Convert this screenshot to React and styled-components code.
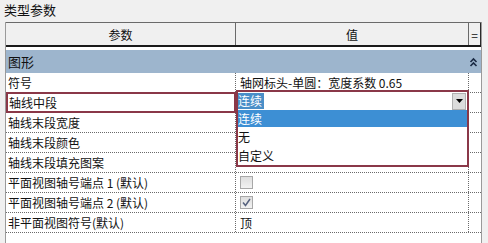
import React from "react";
import styled, { createGlobalStyle } from "styled-components";

const GlobalStyle = createGlobalStyle`
  body {
    margin: 0;
    background: #f0f0f0;
    font-family: "Noto Sans CJK SC", "Noto Sans", sans-serif;
    color: #111;
  }
`;

const COLS = "230px 233px 12px";
const MAROON = "#8a3848";

const Page = styled.div`
  width: 488px;
  height: 243px;
  display: flex;
  flex-direction: column;
  overflow: hidden;
`;

const Title = styled.div`
  height: 22px;
  padding-left: 4px;
  font-size: 13px;
  line-height: 19px;
`;

const Frame = styled.div`
  flex: 1;
  position: relative;
  width: 475px;
  margin-left: 5px;
  background: #fff;
  border-left: 1px solid #9a9a9a;
  border-right: 1px solid #9a9a9a;
`;

const HeaderRow = styled.div`
  display: grid;
  grid-template-columns: ${COLS};
  height: 22px;
  background: #f0f0f0;
  border-top: 1px solid #6a6a6a;
  border-bottom: 2px solid #1a1a1a;
`;

const HeaderCell = styled.div`
  display: flex;
  align-items: center;
  justify-content: center;
  font-size: 12px;
  border-right: 1px solid ${(p) => (p.$last ? "#2a2a2a" : "#6a6a6a")};
`;

const Gap = styled.div`
  height: 3px;
`;

const GroupRow = styled.div`
  display: flex;
  align-items: center;
  justify-content: space-between;
  height: 23px;
  padding: 0 3px 0 2px;
  background: #9db5cd;
  font-size: 13px;
`;

const Row = styled.div`
  display: grid;
  grid-template-columns: ${COLS};
  height: 19px;
  border-bottom: 1px dotted #6a6a6a;
`;

const Cell = styled.div`
  display: flex;
  align-items: center;
  padding-left: ${(p) => (p.$value ? "4px" : "2px")};
  font-size: 12px;
  white-space: nowrap;
  border-right: ${(p) => (p.$end ? "none" : "1px dotted #6a6a6a")};
  box-sizing: border-box;
  ${(p) =>
    p.$active &&
    `
    border: 2px solid ${MAROON};
    margin: -1px 0 -1px 0;
    padding-left: 1px;
  `}
`;

const Check = styled.span`
  width: 11px;
  height: 11px;
  border: 1px solid #a8a8a8;
  background: linear-gradient(#dedede, #f2f2f2);
  display: flex;
  align-items: center;
  justify-content: center;
`;

const Dropdown = styled.div`
  position: absolute;
  left: 230px;
  top: 68px;
  width: 233px;
  box-sizing: border-box;
  border: 2px solid ${MAROON};
  background: #fff;
  font-size: 12px;
`;

const Field = styled.div`
  display: flex;
  align-items: center;
  justify-content: space-between;
  height: 18px;
  padding-right: 1px;
`;

const SelectedText = styled.span`
  background: #4a8fc8;
  color: #fff;
  padding: 0 2px 0 0;
  line-height: 16px;
`;

const ArrowButton = styled.span`
  width: 12px;
  height: 15px;
  background: #dcdcdc;
  border: 1px solid #b0b0b0;
  display: flex;
  align-items: center;
  justify-content: center;
`;

const Item = styled.div`
  height: ${(p) => (p.$h ? p.$h : 19)}px;
  display: flex;
  align-items: center;
  padding-left: 0;
  background: ${(p) => (p.$selected ? "#3d8fd4" : "transparent")};
  color: ${(p) => (p.$selected ? "#fff" : "#111")};
`;

const rows = [
  { name: "符号", value: "轴网标头-单圆：宽度系数 0.65" },
  { name: "轴线中段", value: "", active: true },
  { name: "轴线末段宽度", value: "" },
  { name: "轴线末段颜色", value: "" },
  { name: "轴线末段填充图案", value: "" },
  { name: "平面视图轴号端点 1 (默认)", check: false },
  { name: "平面视图轴号端点 2 (默认)", check: true },
  { name: "非平面视图符号(默认)", value: "顶" },
];

function App() {
  return (
    <Page>
      <GlobalStyle />
      <Title>类型参数</Title>
      <Frame>
        <HeaderRow>
          <HeaderCell>参数</HeaderCell>
          <HeaderCell>值</HeaderCell>
          <HeaderCell $last>=</HeaderCell>
        </HeaderRow>
        <Gap />
        <GroupRow>
          <span>图形</span>
          <svg width="9" height="10" viewBox="0 0 9 10">
            <path d="M1.5 5 L4.5 2 L7.5 5 M1.5 9 L4.5 6 L7.5 9" fill="none" stroke="#1a2a44" strokeWidth="1.6" />
          </svg>
        </GroupRow>
        {rows.map((r) => (
          <Row key={r.name}>
            <Cell $active={r.active}>{r.name}</Cell>
            <Cell $value>
              {r.check === undefined ? (
                r.value
              ) : (
                <Check>
                  {r.check && (
                    <svg width="9" height="9" viewBox="0 0 9 9">
                      <path d="M1 4.5 L3.5 7.5 L8 1" fill="none" stroke="#56627e" strokeWidth="1.5" />
                    </svg>
                  )}
                </Check>
              )}
            </Cell>
            <Cell $end />
          </Row>
        ))}
        <Dropdown>
          <Field>
            <SelectedText>连续</SelectedText>
            <ArrowButton>
              <svg width="7" height="4" viewBox="0 0 7 4">
                <path d="M0 0 L7 0 L3.5 4 Z" fill="#000" />
              </svg>
            </ArrowButton>
          </Field>
          <Item $selected $h={17}>连续</Item>
          <Item>无</Item>
          <Item $h={19}>自定义</Item>
        </Dropdown>
      </Frame>
    </Page>
  );
}

export default App;
